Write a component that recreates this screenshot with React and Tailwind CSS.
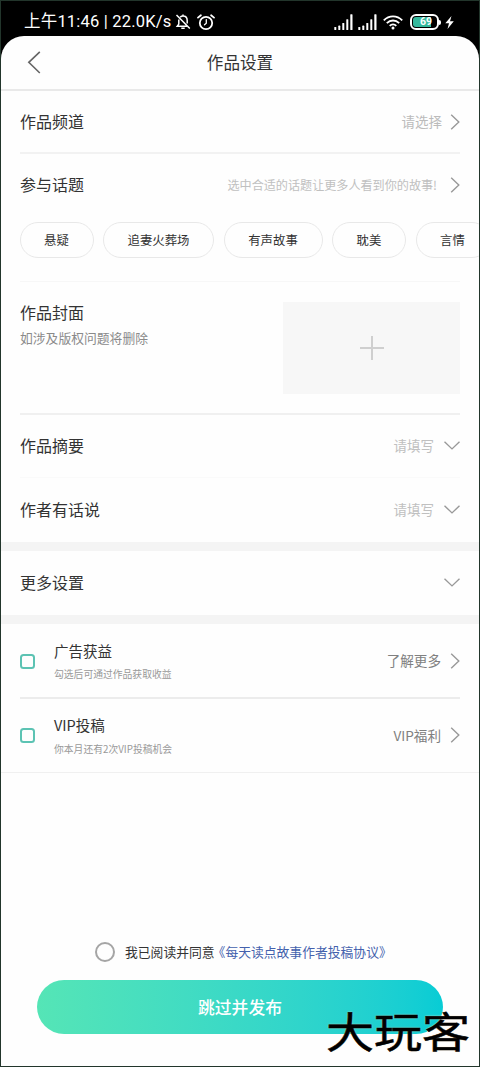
const topics = [
  { name: '悬疑', width: 'w-[74px]' },
  { name: '追妻火葬场', width: 'w-[111px]' },
  { name: '有声故事', width: 'w-[99px]' },
  { name: '耽美', width: 'w-[74px]' },
  { name: '言情', width: 'w-[74px]' },
];

function ChevronRight() {
  return (
    <svg className="w-[10px] h-4 shrink-0" viewBox="0 0 10 16" fill="none" stroke="#999" strokeWidth="1.4">
      <path d="M1.2 0.7 8.8 8 1.2 15.3" />
    </svg>
  );
}

function ChevronDown() {
  return (
    <svg className="w-4 h-[9px] mb-px shrink-0" viewBox="0 0 16 9" fill="none" stroke="#999" strokeWidth="1.4">
      <path d="M0.5 0.8 8 7.9 15.5 0.8" />
    </svg>
  );
}

function Signal() {
  return (
    <svg className="w-[19px] h-4" viewBox="0 0 19 16" fill="#fff">
      <rect x="0.3" y="13" width="2" height="3" rx="0.6" />
      <rect x="4.3" y="11.6" width="2" height="4.4" rx="0.6" />
      <rect x="8.3" y="9" width="2" height="7" rx="0.6" />
      <rect x="12.3" y="5.2" width="2" height="10.8" rx="0.6" />
      <rect x="16.3" y="0.2" width="2.2" height="15.8" rx="0.6" />
    </svg>
  );
}

function StatusBar() {
  return (
    <div className="flex items-center h-[35px] pt-[7px] pl-[23px] pr-[25px] text-white">
      <span className="w-[151px] text-[16.5px] tracking-[0.2px] whitespace-nowrap font-[Roboto,'Noto_Sans_CJK_SC',sans-serif]">上午11:46 | 22.0K/s</span>
      <svg className="w-4 h-4" viewBox="0 0 16 16" fill="none" stroke="#fff" strokeWidth="1.5">
        <path d="M5.2 3.2C6 2.3 6.8 2 8 2c2.7 0 4.2 1.9 4.2 4.5v3M3.8 5.5v4.6L2.2 12.3H12M6.3 14.3h3.4M8 0.5V2M1.5 1 14.8 14.6" />
      </svg>
      <svg className="w-[18px] h-[17px] ml-[6px]" viewBox="0 0 18 17" fill="none" stroke="#fff" strokeWidth="1.8" strokeLinecap="round">
        <circle cx="9" cy="9" r="6.2" />
        <path d="M1 3.6 3.9 1.2M17 3.6 14.1 1.2" />
        <path d="M9.3 5.6V9.2L7.5 10.8" strokeWidth="1.3" />
      </svg>
      <div className="flex items-center ml-auto">
        <Signal />
        <span className="w-[5px]" />
        <Signal />
        <svg className="w-[20px] h-[15px] ml-[6px]" viewBox="0 0 20 15" fill="none" stroke="#fff" strokeWidth="1.9">
          <path d="M0.8 5.3C6 0 14 0 19.2 5.3M3.8 8.1C7.4 4.7 12.6 4.7 16.2 8.1M6.7 10.9c1.9-1.8 4.7-1.8 6.6 0" />
          <circle cx="10" cy="12.9" r="1.5" fill="#fff" stroke="none" />
        </svg>
        <div className="flex items-center ml-[7px]">
          <div className="w-[29px] h-4 rounded-[6px] border-2 border-white p-px">
            <div className="flex items-center justify-center h-full rounded-[3px] bg-linear-to-r from-[#35b99d] from-80% to-black to-80% text-[10.5px] leading-none font-bold font-[Roboto,sans-serif]">
              <span className="pt-px pl-[3px]">69</span>
            </div>
          </div>
          <span className="w-[2px] h-[5px] rounded-r bg-white" />
        </div>
        <svg className="w-[9px] h-[13px] ml-[4px]" viewBox="0 0 9 13" fill="#fff">
          <path d="M6.5 0 0.3 7.3H4L2.5 13 8.8 5.3H5z" />
        </svg>
      </div>
    </div>
  );
}

function Header() {
  return (
    <div className="relative flex items-center justify-center h-[55px] border-b-2 border-[#e9e9e9] text-[16.6px]">
      <svg className="absolute left-[26px] top-[15px] w-[14px] h-[23px]" viewBox="0 0 14 23" fill="none" stroke="#666" strokeWidth="1.6">
        <path d="M12.8 0.8 1.8 11.3 12.8 22" />
      </svg>
      作品设置
    </div>
  );
}

function CheckRow({ title, note, link }) {
  return (
    <div className="flex items-center h-[73px]">
      <span className="w-[15px] h-[15px] mt-px rounded-[3.5px] border-2 border-[#5cc3b3]" />
      <div className="flex flex-col gap-[12px] pt-[3px] ml-[19px]">
        <span className="text-[14.5px]">{title}</span>
        <span className="text-[9.8px] text-[#999]">{note}</span>
      </div>
      <span className="ml-auto mr-[9px] pt-px text-[13.6px] text-[#808080]">{link}</span>
      <ChevronRight />
    </div>
  );
}

function App() {
  return (
    <div className="relative flex flex-col w-[480px] h-[1067px] overflow-hidden border border-[#22352b] bg-black text-[#333] leading-none font-['Noto_Sans_CJK_SC',sans-serif]">
      <StatusBar />
      <div className="flex flex-col flex-1 rounded-t-[23px] bg-[#fefefe] overflow-hidden">
        <Header />

        <div className="px-[19px]">
          <div className="flex items-center h-[61px]">
            <span className="pb-[2px] text-[16px]">作品频道</span>
            <span className="ml-auto mr-[8px] text-[13.5px] text-[#bbb]">请选择</span>
            <ChevronRight />
          </div>
          <div className="h-[2px] bg-[#f2f2f2]" />

          <div className="flex items-center h-[62px]">
            <span className="pb-[2px] text-[16px]">参与话题</span>
            <span className="ml-auto mr-[13px] text-[12.1px] text-[#c0c0c0]">选中合适的话题让更多人看到你的故事!</span>
            <ChevronRight />
          </div>
          <div className="flex gap-[9.5px] h-[65px] pt-[6px] -mr-[19px] -ml-[0.5px] overflow-hidden">
            {topics.map((topic) => (
              <span
                key={topic.name}
                className={`${topic.width} h-9 shrink-0 flex items-center justify-center rounded-full border border-[#e8e8e8] text-[12.4px]`}
              >
                {topic.name}
              </span>
            ))}
          </div>
          <div className="h-px bg-[#f7f7f7]" />

          <div className="flex justify-between h-[131px] pt-[20px]">
            <div className="flex flex-col gap-[12px] pt-[2px]">
              <span className="text-[16px]">作品封面</span>
              <span className="text-[12.8px] text-[#8a8a8a]">如涉及版权问题将删除</span>
            </div>
            <div className="flex items-center justify-center w-[177px] h-[92px] bg-[#f7f7f7]">
              <svg className="w-6 h-6" viewBox="0 0 24 24" stroke="#cfcfcf" strokeWidth="2">
                <path d="M12 0V24M0 12H24" />
              </svg>
            </div>
          </div>
          <div className="h-[2px] bg-[#f0f0f0]" />

          <div className="flex items-center h-[62px]">
            <span className="pb-[2px] text-[16px]">作品摘要</span>
            <span className="ml-auto mr-[10px] text-[13.5px] text-[#c0c0c0]">请填写</span>
            <ChevronDown />
          </div>
          <div className="h-px bg-[#fafafa]" />
          <div className="flex items-center h-[64px]">
            <span className="pb-[2px] text-[16px]">作者有话说</span>
            <span className="ml-auto mr-[10px] text-[13.5px] text-[#c0c0c0]">请填写</span>
            <ChevronDown />
          </div>
        </div>

        <div className="h-[9px] bg-[#f4f4f4]" />
        <div className="flex items-center justify-between h-[64px] px-[19px]">
          <span className="pb-[2px] text-[16px]">更多设置</span>
          <ChevronDown />
        </div>
        <div className="h-[9px] bg-[#f4f4f4]" />

        <div className="px-[19px]">
          <CheckRow title="广告获益" note="勾选后可通过作品获取收益" link="了解更多" />
          <div className="h-[1.5px] bg-[#ececec]" />
          <CheckRow title="VIP投稿" note="你本月还有2次VIP投稿机会" link="VIP福利" />
        </div>
        <div className="h-px bg-[#f0f0f0]" />

        <div className="mt-auto flex items-center pl-[94px] pb-[18px] text-[12.8px] whitespace-nowrap">
          <span className="w-5 h-5 rounded-full border-2 border-[#a5a5a5] mr-[10px]" />
          <span>我已阅读并同意</span>
          <span className="-ml-[2px] text-[#4461ad]">《每天读点故事作者投稿协议》</span>
        </div>
        <div className="flex items-center justify-center h-[54px] mx-9 mb-8 rounded-full bg-linear-to-r from-[#55e5b6] to-[#07ccd5] text-white text-[16.8px] font-medium">
          跳过并发布
        </div>
      </div>

      {/* watermark */}
      <div className="absolute left-[325px] top-[1007px] text-[48px] font-normal text-black whitespace-nowrap origin-top scale-y-[0.88] [-webkit-text-stroke:0.6px_#000] [text-shadow:0_0_2px_#f3e3c0]">
        大玩客
      </div>
    </div>
  );
}

export default App;
